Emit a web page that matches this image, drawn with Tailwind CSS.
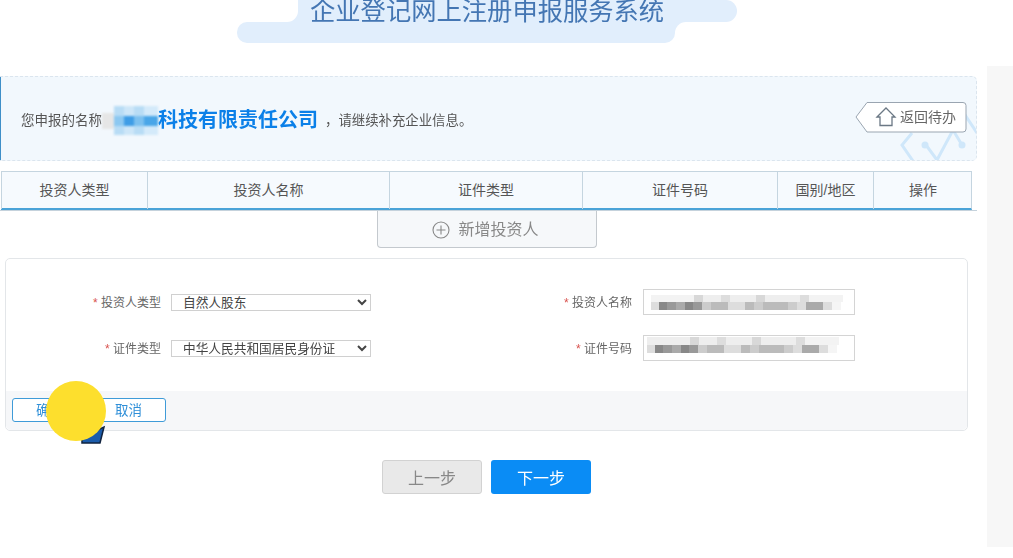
<!DOCTYPE html>
<html lang="zh-CN">
<head>
    <meta charset="UTF-8">
    <meta name="viewport" content="width=device-width, initial-scale=1.0">
    <title>企业登记网上注册申报服务系统</title>
    <script src="https://cdn.jsdelivr.net/npm/@tailwindcss/browser@4"></script>
</head>
<body class="bg-white h-[558px] overflow-hidden font-['Liberation_Sans','Noto_Sans_CJK_SC',sans-serif]">
    <div class="flex items-start w-[1013px] blur-[0.35px]">
        <div class="w-[987px] shrink-0">
            <!-- title cloud -->
            <div class="relative h-[76px]">
                <div class="ml-[270px] w-[467px] h-[22px] bg-[#e1eefc] rounded-r-[11px]">
                    <div class="w-[28px] h-[22px] bg-white rounded-br-[11px]"></div>
                </div>
                <div class="relative ml-[237px] w-[438px] h-[21px] bg-[#e1eefc] rounded-l-[10px] rounded-br-[10px]">
                    <div class="absolute left-full top-0 w-[12px] h-[11px] bg-[#e1eefc]">
                        <div class="w-[12px] h-[11px] bg-white rounded-tl-[11px]"></div>
                    </div>
                </div>
                <h1 class="absolute left-[310px] top-[-6px] text-[25.3px] leading-[34px] text-[#4476b3] whitespace-nowrap">企业登记网上注册申报服务系统</h1>
            </div>

            <!-- banner -->
            <div class="relative flex items-center w-[977px] h-[85px] pt-[4px] overflow-hidden bg-[#f2f8fd] border border-dashed border-[#dbe5ee] border-l-0 rounded-r-[5px] text-[#555]">
                <div class="absolute left-0 top-0 bottom-0 w-px bg-[#3f8fc8]"></div>
                <svg class="absolute left-[899px] top-[25px]" width="78" height="60" viewBox="0 0 78 60" fill="none" stroke="#cfe7fa" stroke-width="3">
                    <path d="M13 31 L3 43 L14 59"/>
                    <path d="M27 43 L38 58 L54 28 L63 43"/>
                    <path d="M54 28 L64 10 L78 31"/>
                    <circle cx="26" cy="43" r="3.5" fill="#cfe7fa" stroke="none"/>
                    <circle cx="63" cy="43" r="3.5" fill="#cfe7fa" stroke="none"/>
                </svg>
                <span class="ml-[21px] mt-[2px] text-[13.5px] whitespace-nowrap">您申报的名称</span>
                <span class="flex items-center w-[56px] h-[30px] blur-[1px]">
                    <span class="w-[12px] h-[16px] bg-[#e6e6e6]"></span>
                    <span class="relative w-[44px] h-[29px] bg-[linear-gradient(90deg,#b8dcf5_0_10px,#cde6f8_10px_20px,#b8dcf5_20px_30px,#d4eafa_30px_44px)]">
                        <span class="absolute left-0 top-[10px] w-[44px] h-[10px] bg-[linear-gradient(90deg,#8cc8f1_0_10px,#3f9de6_10px_20px,#7cc0ef_20px_30px,#4aa6e8_30px_44px)]"></span>
                    </span>
                </span>
                <span class="mb-[2px] text-[20px] font-bold text-[#0b80e8] whitespace-nowrap">科技有限责任公司</span>
                <span class="ml-[7px] mt-[2px] text-[13.4px] whitespace-nowrap">，</span>
                <span class="mt-[2px] text-[13.4px] whitespace-nowrap">请继续补充企业信息。</span>
                <!-- back button -->
                <div class="absolute left-[855px] top-[25px]">
                    <svg class="block" width="112" height="31" viewBox="0 0 112 31" fill="none">
                        <path d="M12 .5 H108 a3 3 0 0 1 3 3 V27 a3 3 0 0 1 -3 3 H12 L1 15 Z" fill="#fff" stroke="#9aa5b1"/>
                        <path d="M22 15 L31 6 L40 15 H37 V23.500 H25 V15 Z" stroke="#6b7885" stroke-width="1.300"/>
                    </svg>
                    <span class="absolute left-[45px] top-[6px] text-[14px] leading-[18px] text-[#666] whitespace-nowrap">返回待办</span>
                </div>
            </div>

            <!-- table head -->
            <div class="mt-[10px] w-[977px] border-b border-[#c5d2dc]">
                <div class="ml-px w-[971px] h-[39px] grid grid-cols-[146px_242px_193px_195px_96px_99px] bg-[#f6fafe] border-t border-r border-[#c5d5e0] border-b-2 border-b-[#4aa3d8] text-[14px] text-[#555] text-center leading-[37px]">
                    <div class="border-l border-[#c5d5e0]">投资人类型</div>
                    <div class="border-l border-[#c5d5e0]">投资人名称</div>
                    <div class="border-l border-[#c5d5e0]">证件类型</div>
                    <div class="border-l border-[#c5d5e0]">证件号码</div>
                    <div class="border-l border-[#c5d5e0]">国别/地区</div>
                    <div class="border-l border-[#c5d5e0]">操作</div>
                </div>
            </div>

            <!-- add investor -->
            <div class="ml-[377px] w-[220px] h-[37px] pr-[3px] pt-[2px] flex items-center justify-center gap-[8px] bg-[#f6f8fa] border border-t-0 border-[#c4c9ce] rounded-b-[4px] text-[16px] text-[#888]">
                <svg width="18" height="18" viewBox="0 0 18 18" fill="none" stroke="#888" stroke-width="1.100">
                    <circle cx="9" cy="9" r="8"/>
                    <path d="M9 4.500 V13.500 M4.500 9 H13.500"/>
                </svg>
                <span>新增投资人</span>
            </div>

            <!-- form card -->
            <div class="relative ml-[5px] mt-[10px] w-[963px] h-[173px] flex flex-col bg-white border border-[#e3e6e9] rounded-[5px]">
                <div class="flex-1 pt-[30px] flex flex-col gap-[20px] text-[12px] text-[#666]">
                    <div class="flex items-center h-[26px]">
                        <label class="w-[155px] mt-[2px] text-right whitespace-nowrap"><span class="text-[#d9534f]">*</span> 投资人类型</label>
                        <select class="ml-[10px] w-[200px] h-[17px] py-0 pl-[7px] border border-[#d0d0d0] bg-white text-[12.7px] leading-none text-[#444]">
                            <option>自然人股东</option>
                        </select>
                        <label class="w-[261px] mt-[2px] text-right whitespace-nowrap"><span class="text-[#d9534f]">*</span> 投资人名称</label>
                        <div class="ml-[11px] w-[212px] h-[26px] border border-[#d4d4d4] pt-[5px] pl-[7px]">
                            <div class="h-[7px] w-[192px] blur-[0.6px] bg-[linear-gradient(90deg,#f3f3f3_0_43px,#d8d8d8_43px_52px,#eee_52px_70px,#ddd_70px_79px,#eee_79px_105px,#d8d8d8_105px_114px,#eee_114px_149px,#ddd_149px_158px,#f3f3f3_158px_192px)]"></div>
                            <div class="h-[8px] w-[190px] blur-[0.6px] bg-[linear-gradient(90deg,#ddd_0_8px,#888_8px_16px,#999_16px_25px,#aaa_25px_34px,#888_34px_42px,#999_42px_51px,#ccc_51px_60px,#bbb_60px_77px,#ddd_77px_94px,#bbb_94px_103px,#ccc_103px_112px,#bbb_112px_137px,#ccc_137px_146px,#ddd_146px_155px,#aaa_155px_172px,#ddd_172px_181px,#f5f5f5_181px_190px)]"></div>
                        </div>
                    </div>
                    <div class="flex items-center h-[26px]">
                        <label class="w-[155px] mt-[2px] text-right whitespace-nowrap"><span class="text-[#d9534f]">*</span> 证件类型</label>
                        <select class="ml-[10px] w-[200px] h-[17px] py-0 pl-[7px] border border-[#d0d0d0] bg-white text-[12.7px] leading-none text-[#444]">
                            <option>中华人民共和国居民身份证</option>
                        </select>
                        <label class="w-[261px] mt-[2px] text-right whitespace-nowrap"><span class="text-[#d9534f]">*</span> 证件号码</label>
                        <div class="ml-[11px] w-[212px] h-[26px] border border-[#d4d4d4] pt-[1px] pl-[3px]">
                            <div class="h-[8px] w-[192px] blur-[0.6px] bg-[linear-gradient(90deg,#eee_0_43px,#d8d8d8_43px_52px,#eee_52px_70px,#ddd_70px_79px,#eee_79px_105px,#d8d8d8_105px_114px,#eee_114px_149px,#ddd_149px_158px,#f3f3f3_158px_192px)]"></div>
                            <div class="h-[8px] w-[190px] blur-[0.6px] bg-[linear-gradient(90deg,#ddd_0_8px,#888_8px_16px,#999_16px_25px,#aaa_25px_34px,#888_34px_42px,#999_42px_51px,#ccc_51px_60px,#bbb_60px_77px,#ddd_77px_94px,#bbb_94px_103px,#ccc_103px_112px,#bbb_112px_137px,#ccc_137px_146px,#ddd_146px_155px,#aaa_155px_172px,#ddd_172px_181px,#f5f5f5_181px_190px)]"></div>
                        </div>
                    </div>
                </div>
                <div class="h-[39px] bg-[#f6f7f9] rounded-b-[5px] pt-[7px] pl-[6px]">
                    <div class="w-[154px] h-[24px] grid grid-cols-2 bg-white border border-[#3f9bd8] rounded-[3px] text-[13.5px] leading-[24px] text-[#2f8fd8] text-center">
                        <button class="text-left pl-[23px]">确定</button>
                        <button class="text-left pl-[26px]">取消</button>
                    </div>
                </div>
            </div>

            <!-- step buttons -->
            <div class="ml-[382px] mt-[29px] flex gap-[9px] text-[16px]">
                <button class="w-[100px] h-[34px] pt-[3px] bg-[#e9e9e9] border border-[#d2d2d2] rounded-[3px] text-[#888]">上一步</button>
                <button class="w-[100px] h-[34px] pt-[3px] bg-[#0a8cf5] rounded-[3px] text-white">下一步</button>
            </div>
        </div>

        <!-- right rail -->
        <div class="w-[26px] mt-[66px] h-[481px] bg-[#f7f7f7]"></div>
    </div>

    <!-- cursor highlight and pointer -->
    <svg class="absolute left-[78px] top-[424px]" width="28" height="22" viewBox="0 0 28 22">
        <path d="M4 19 L22 19 L26 3 L4 13 Z" fill="#1b5cab" stroke="#10233f" stroke-width="1.500"/>
    </svg>
    <div class="absolute left-[46px] top-[381px] w-[60px] h-[60px] rounded-full bg-[#fddf2d]"></div>
</body>
</html>
